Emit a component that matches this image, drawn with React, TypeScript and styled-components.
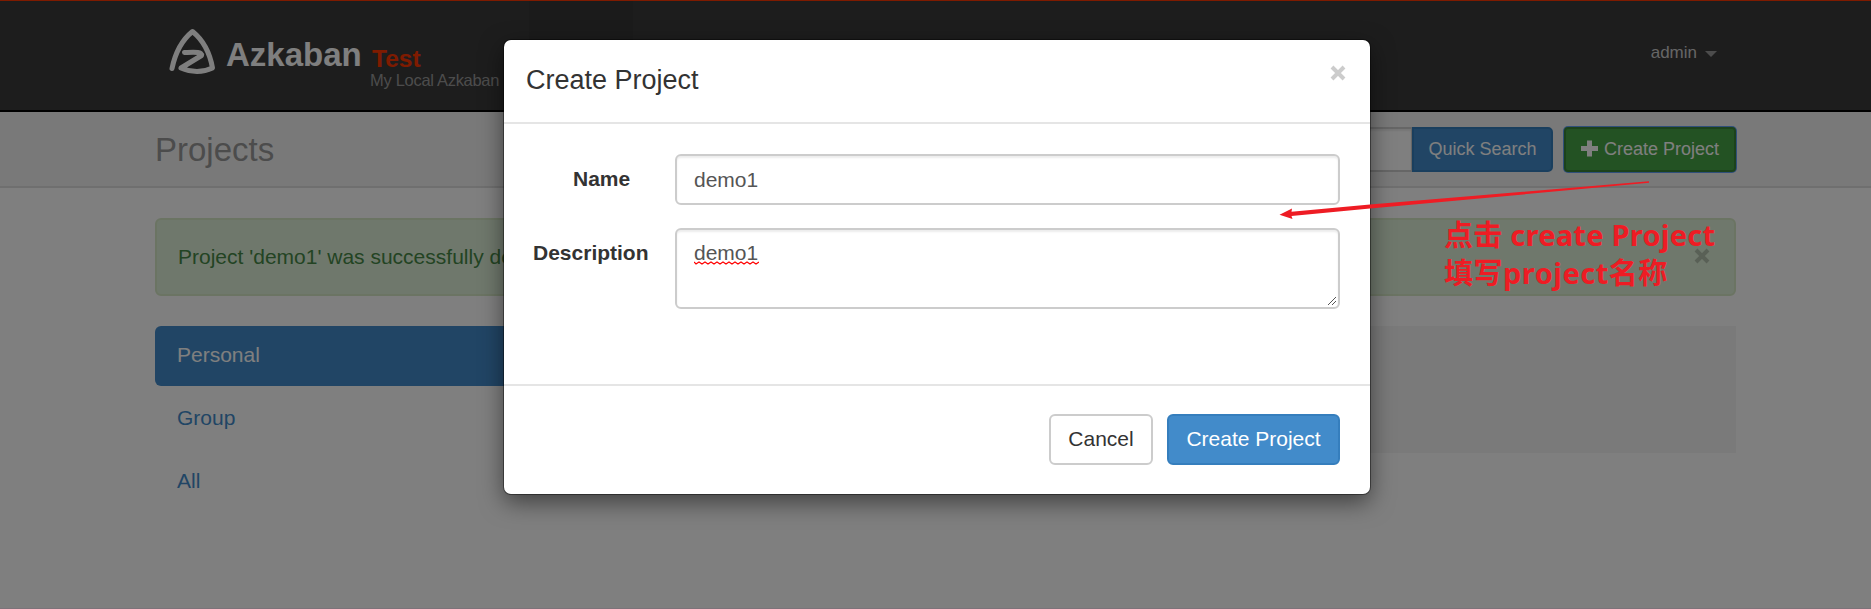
import React from "react";
import styled, { createGlobalStyle } from "styled-components";

const Global = createGlobalStyle`
  *, *::before, *::after { box-sizing: border-box; }
  html, body { margin: 0; padding: 0; overflow: hidden; }
  body {
    background: #fff;
    color: #333;
    font: 21px/30px "Liberation Sans", Arial, sans-serif;
  }
  button, input, textarea { font: inherit; }
`;

const Page = styled.div`
  position: relative;
  height: 609px;
  overflow: hidden;
  border-bottom: 1px solid #7d737a;
`;

const Navbar = styled.header`
  display: flex;
  height: 112px;
  padding: 0 154px 0 155px;
  background: #3a3a3a;
  border-top: 1px solid #ff3601;
  border-bottom: 2px solid #000;
`;

const Logo = styled.svg`
  flex: none;
  width: 56px;
  height: 56px;
  margin: 22px 0 0 9px;
`;

const Brand = styled.div`
  width: 145px;
  padding: 35px 0 0 6px;
  color: #fff;
  font-size: 33px;
  font-weight: bold;
  line-height: 38px;
  white-space: nowrap;
`;

const Instance = styled.div`
  width: 164px;
  padding: 44px 0 0 5px;
  white-space: nowrap;
`;

const InstanceName = styled.div`
  padding-left: 2px;
  color: #ff3601;
  font-size: 24.5px;
  font-weight: bold;
  line-height: 27px;
`;

const InstanceLabel = styled.div`
  color: #999;
  font-size: 16.5px;
  letter-spacing: -0.3px;
  line-height: 19px;
  margin-top: -1px;
`;

const NavItem = styled.div`
  width: 104px;
  background: #363636;
`;

const User = styled.div`
  display: flex;
  align-items: center;
  gap: 8px;
  height: 30px;
  margin: 37px 0 0 auto;
  color: #ccc;
  font-size: 17px;
`;

const Caret = styled.span`
  border: 6px solid transparent;
  border-top-color: #999;
  border-bottom: 0;
  margin-top: 2px;
`;

const TitleBar = styled.section`
  display: flex;
  align-items: flex-start;
  height: 76px;
  padding: 15px 135px 0 155px;
  background: #f3f3f3;
  border-bottom: 2px solid #dfdfdf;
`;

const Title = styled.h1`
  margin: 4px auto 0 0;
  color: #999;
  font-size: 33px;
  font-weight: normal;
  line-height: 38px;
`;

const Search = styled.div`
  display: flex;
  margin-right: 11px;
`;

const SearchField = styled.input`
  width: 260px;
  height: 45px;
  background: #fff;
  border: 2px solid #ccc;
  border-right: 1px solid #ccc;
  border-radius: 6px 0 0 6px;
  box-shadow: inset 0 2px 2px rgba(0, 0, 0, 0.08);
`;

const BarButton = styled.button<{ $green?: boolean }>`
  display: flex;
  align-items: center;
  justify-content: center;
  width: ${(p) => (p.$green ? 172 : 141)}px;
  height: 45px;
  padding: 0 0 2px;
  gap: 6px;
  color: #fff;
  background: ${(p) => (p.$green ? "#47a447" : "#428bca")};
  border: 2px solid ${(p) => (p.$green ? "#398439" : "#357ebd")};
  border-radius: ${(p) => (p.$green ? "4px" : "0 5px 5px 0")};
  box-shadow: ${(p) => (p.$green ? "0 0 0 1px #5e9ef5" : "none")};
  font-size: 18px;
  white-space: nowrap;
`;

const Content = styled.main`
  padding: 30px 135px 0 155px;
`;

const Alert = styled.div`
  display: flex;
  justify-content: space-between;
  align-items: center;
  height: 78px;
  padding: 0 22px 0 21px;
  color: #468847;
  background: #dff0d8;
  border: 2px solid #d6e9c6;
  border-radius: 6px;
`;

const Columns = styled.div`
  display: flex;
  gap: 45px;
  margin-top: 30px;
`;

const Pills = styled.nav`
  display: flex;
  flex-direction: column;
  gap: 3px;
  width: 361px;
`;

const Pill = styled.a<{ $active?: boolean }>`
  height: 60px;
  padding: 14px 22px;
  border-radius: 6px;
  color: ${(p) => (p.$active ? "#fff" : "#428bca")};
  background: ${(p) => (p.$active ? "#428bca" : "transparent")};
`;

const Well = styled.div`
  flex: 1;
  height: 127px;
  background: #f5f5f5;
`;

const Backdrop = styled.div`
  position: absolute;
  inset: 0;
  display: flex;
  align-items: flex-start;
  padding: 40px 0 0 504px;
  background: rgba(0, 0, 0, 0.5);
`;

const Dialog = styled.div`
  width: 866px;
  height: 454px;
  background: #fff;
  border-radius: 7px;
  box-shadow: 0 0 0 1px rgba(0, 0, 0, 0.4), 0 8px 23px rgba(0, 0, 0, 0.5);
`;

const DialogHeader = styled.div`
  display: flex;
  justify-content: space-between;
  height: 84px;
  padding: 21px 23px 0 22px;
  border-bottom: 2px solid #e5e5e5;
`;

const DialogTitle = styled.h2`
  margin: 0;
  font-size: 27px;
  font-weight: normal;
  line-height: 38px;
`;

const Cross = styled.svg<{ $tone: string }>`
  flex: none;
  width: 16px;
  height: 16px;
  stroke: ${(p) => p.$tone};
  stroke-width: 4;
`;

const HeaderCross = styled(Cross)`
  margin: 4px 1px 0 0;
`;

const AlertCross = styled(Cross)`
  margin: -2px 2px 0 0;
`;

const DialogBody = styled.div`
  display: flex;
  flex-direction: column;
  gap: 23px;
  height: 260px;
  padding: 30px;
`;

const Field = styled.div`
  display: flex;
`;

const Label = styled.label<{ $inset: number }>`
  width: 141px;
  padding-top: 10px;
  text-indent: ${(p) => p.$inset}px;
  font-weight: bold;
`;

const Input = styled.input`
  width: 665px;
  height: 51px;
  padding: 0 17px;
  color: #555;
  border: 2px solid #ccc;
  border-radius: 6px;
  outline: 0;
  box-shadow: inset 0 2px 2px rgba(0, 0, 0, 0.075);
`;

const TextBox = styled.div`
  display: flex;
  justify-content: space-between;
  align-items: flex-end;
  width: 665px;
  height: 81px;
  padding: 0 1px 1px 17px;
  color: #555;
  border: 2px solid #ccc;
  border-radius: 6px;
  box-shadow: inset 0 2px 2px rgba(0, 0, 0, 0.075);
`;

const Typed = styled.div`
  align-self: flex-start;
  display: flex;
  flex-direction: column;
  padding-top: 8px;
`;

const Squiggle = styled.svg`
  width: 65px;
  height: 4px;
  margin-top: -7px;
`;

const Grip = styled.svg`
  width: 10px;
  height: 10px;
`;

const DialogFooter = styled.div`
  display: flex;
  justify-content: flex-end;
  gap: 14px;
  padding: 28px 30px 0;
  border-top: 2px solid #e5e5e5;
`;

const Button = styled.button<{ $primary?: boolean }>`
  width: ${(p) => (p.$primary ? 173 : 104)}px;
  height: 51px;
  padding: 0 0 1px;
  color: ${(p) => (p.$primary ? "#fff" : "#333")};
  background: ${(p) => (p.$primary ? "#428bca" : "#fff")};
  border: 2px solid ${(p) => (p.$primary ? "#357ebd" : "#ccc")};
  border-radius: 6px;
`;

const Arrow = styled.svg`
  position: absolute;
  left: 1270px;
  top: 175px;
  width: 390px;
  height: 50px;
`;

const Note = styled.div`
  position: absolute;
  left: 1444px;
  top: 216px;
  color: #ee1c24;
  font: bold 29px/38px "Noto Sans", "Noto Sans CJK SC", sans-serif;
  white-space: nowrap;
`;

const NoteLine = styled.div<{ $spacing: number }>`
  letter-spacing: ${(p) => p.$spacing}px;
`;

const crossPath = "M2 2 L14 14 M14 2 L2 14";

export default function App() {
  return (
    <>
      <Global />
      <Page>
        <Navbar>
          <Logo viewBox="0 0 56 56" fill="none" stroke="#fff" strokeWidth="5" strokeLinecap="round" strokeLinejoin="round">
            <path d="M8 45.500 C11 31 18 17 28.500 8.500 C39 17 46 31 48.500 45 C39 49.500 27 49.500 17 45 L37.500 32.500 C38.500 28.500 30 29.200 20.500 29.500" />
          </Logo>
          <Brand>Azkaban</Brand>
          <Instance>
            <InstanceName>Test</InstanceName>
            <InstanceLabel>My Local Azkaban</InstanceLabel>
          </Instance>
          <NavItem />
          <User>
            admin <Caret />
          </User>
        </Navbar>
        <TitleBar>
          <Title>Projects</Title>
          <Search>
            <SearchField readOnly />
            <BarButton>Quick Search</BarButton>
          </Search>
          <BarButton $green>
            <svg width="17" height="17" viewBox="0 0 17 17" fill="#fff">
              <path d="M6 0.5h5v5.500h6v5h-6v5.500h-5v-5.500h-6v-5h6z" />
            </svg>
            Create Project
          </BarButton>
        </TitleBar>
        <Content>
          <Alert>
            Project 'demo1' was successfully de
            <AlertCross viewBox="0 0 16 16" $tone="#b2c0ad">
              <path d={crossPath} />
            </AlertCross>
          </Alert>
          <Columns>
            <Pills>
              <Pill $active>Personal</Pill>
              <Pill>Group</Pill>
              <Pill>All</Pill>
            </Pills>
            <Well />
          </Columns>
        </Content>
        <Backdrop>
          <Dialog>
            <DialogHeader>
              <DialogTitle>Create Project</DialogTitle>
              <HeaderCross viewBox="0 0 16 16" $tone="#ccc">
                <path d={crossPath} />
              </HeaderCross>
            </DialogHeader>
            <DialogBody>
              <Field>
                <Label $inset={39}>Name</Label>
                <Input defaultValue="demo1" />
              </Field>
              <Field>
                <Label $inset={-1}>Description</Label>
                <TextBox>
                  <Typed>
                    demo1
                    <Squiggle viewBox="0 0 65 4" fill="none" stroke="#f00" strokeWidth="1.2">
                      <path d="M0 1 l2 2 l3 -2 l3 2 l3 -2 l3 2 l3 -2 l3 2 l3 -2 l3 2 l3 -2 l3 2 l3 -2 l3 2 l3 -2 l3 2 l3 -2 l3 2 l3 -2 l3 2 l3 -2 l3 2 l3 -2" />
                    </Squiggle>
                  </Typed>
                  <Grip viewBox="0 0 10 10" stroke="#555" strokeWidth="1">
                    <path d="M1 9 L9 1 M5 9 L9 5" />
                  </Grip>
                </TextBox>
              </Field>
            </DialogBody>
            <DialogFooter>
              <Button>Cancel</Button>
              <Button $primary>Create Project</Button>
            </DialogFooter>
          </Dialog>
        </Backdrop>
        <Arrow viewBox="1270 175 390 50" fill="#ee1c24">
          <path d="M1649 181.300 L1370 204.500 L1291.500 211.800 L1292 208.500 L1279.500 214.700 L1292.500 219 L1291.500 216 L1370 208.500 L1649 182.800 Z" />
        </Arrow>
        <Note>
          <NoteLine $spacing={0.25}>点击 create Project</NoteLine>
          <NoteLine $spacing={0.5}>填写project名称</NoteLine>
        </Note>
      </Page>
    </>
  );
}
